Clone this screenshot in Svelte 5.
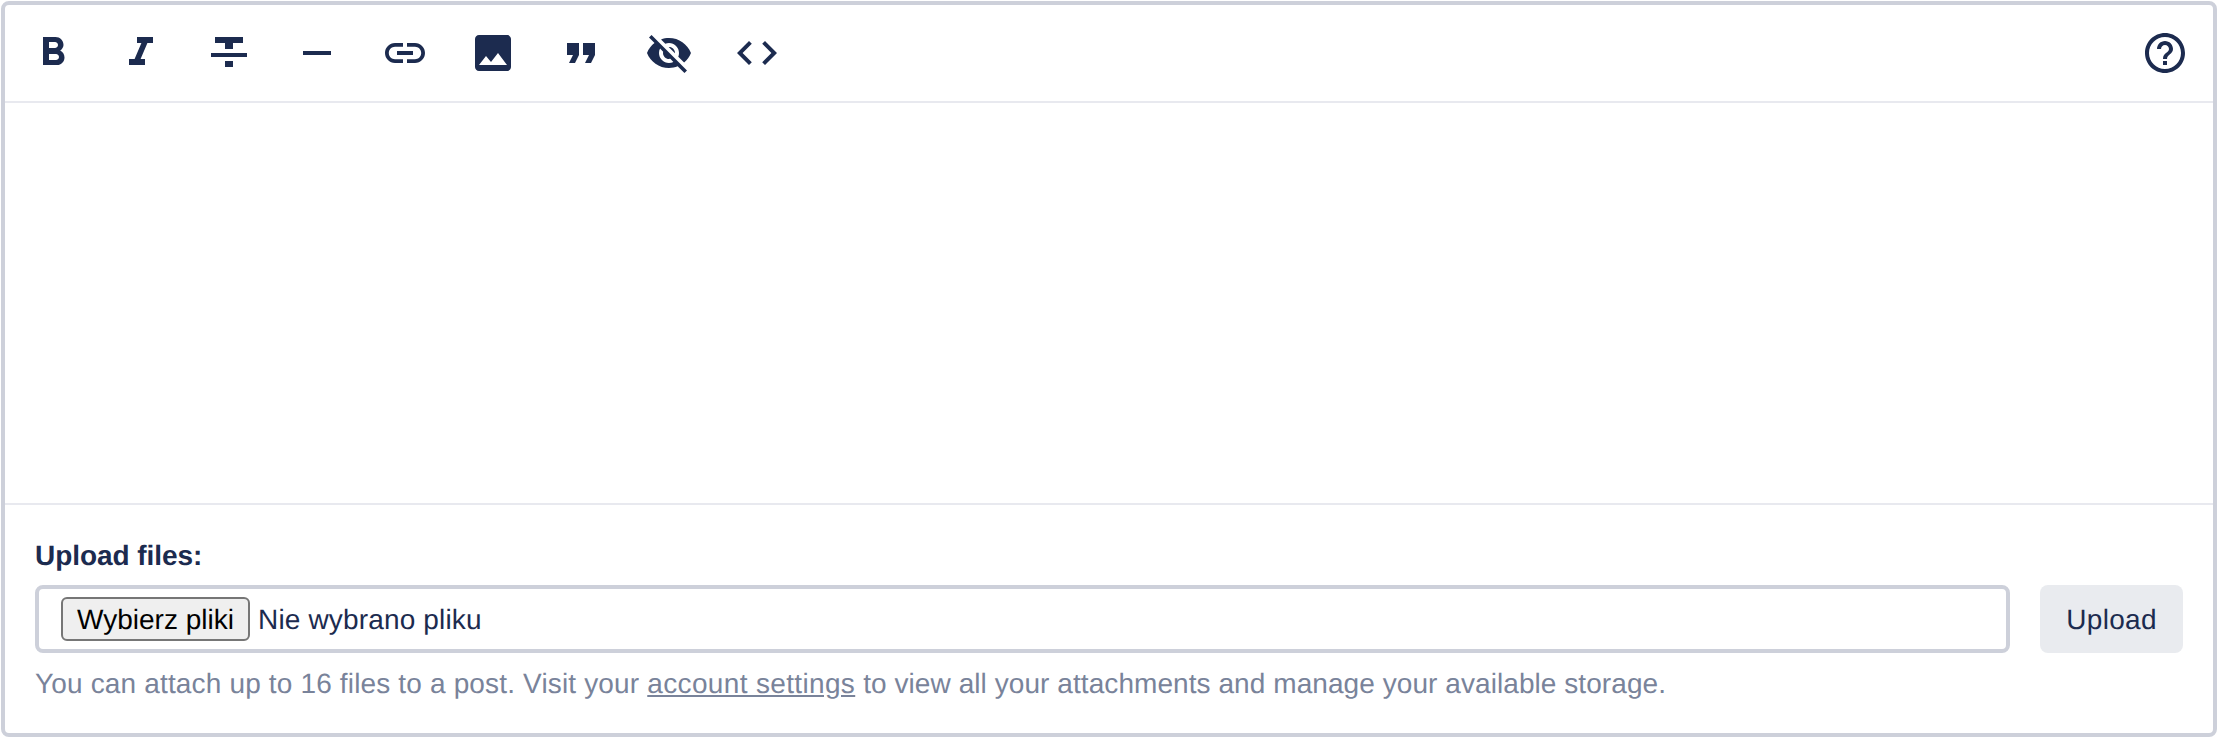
<script>
  const leftIcons = [
    'M15.6 10.79c.97-.67 1.65-1.77 1.65-2.79 0-2.26-1.75-4-4-4H7v14h7.04c2.09 0 3.71-1.7 3.71-3.79 0-1.52-.86-2.82-2.15-3.42zM10 6.5h3c.83 0 1.5.67 1.5 1.5s-.67 1.5-1.5 1.5h-3v-3zm3.5 9H10v-3h3.5c.83 0 1.5.67 1.5 1.5s-.67 1.5-1.5 1.5z',
    'M10 4v3h2.21l-3.42 8H6v3h8v-3h-2.21l3.42-8H18V4z',
    'M10 19h4v-3h-4v3zM5 4v3h5v3h4V7h5V4H5zM3 14h18v-2H3v2z',
    'M19 13H5v-2h14v2z',
    'M3.9 12c0-1.71 1.39-3.1 3.1-3.1h4V7H7c-2.76 0-5 2.24-5 5s2.24 5 5 5h4v-1.9H7c-1.71 0-3.1-1.39-3.1-3.1zM8 13h8v-2H8v2zm9-6h-4v1.9h4c1.71 0 3.1 1.39 3.1 3.1s-1.39 3.1-3.1 3.1h-4V17h4c2.76 0 5-2.24 5-5s-2.24-5-5-5z',
    'M21 19V5c0-1.1-.9-2-2-2H5c-1.1 0-2 .9-2 2v14c0 1.1.9 2 2 2h14c1.1 0 2-.9 2-2zM8.5 13.5l2.5 3.01L14.5 12l4.5 6H5l3.5-4.5z',
    'M6 17h3l2-4V7H5v6h3zm8 0h3l2-4V7h-6v6h3z',
    'M12 7c2.76 0 5 2.24 5 5 0 .65-.13 1.26-.36 1.83l2.92 2.92c1.51-1.26 2.7-2.89 3.43-4.75-1.73-4.39-6-7.5-11-7.5-1.4 0-2.74.25-3.98.7l2.16 2.16C10.74 7.13 11.35 7 12 7zM2 4.27l2.28 2.28.46.46C3.08 8.3 1.78 10.02 1 12c1.73 4.39 6 7.5 11 7.5 1.55 0 3.03-.3 4.38-.84l.42.42L19.73 22 21 20.73 3.27 3 2 4.27zM7.53 9.8l1.55 1.55c-.05.21-.08.43-.08.65 0 1.66 1.34 3 3 3 .22 0 .44-.03.65-.08l1.55 1.55c-.67.33-1.41.53-2.2.53-2.76 0-5-2.24-5-5 0-.79.2-1.53.53-2.2zm4.31-.78l3.15 3.15.02-.16c0-1.66-1.34-3-3-3l-.17.01z',
    'M9.4 16.6L4.8 12l4.6-4.6L8 6l-6 6 6 6 1.4-1.4zm5.2 0l4.6-4.6-4.6-4.6L16 6l6 6-6 6-1.4-1.4z'
  ];
  const help = 'M11 18h2v-2h-2v2zm1-16C6.48 2 2 6.48 2 12s4.48 10 10 10 10-4.48 10-10S17.52 2 12 2zm0 18c-4.41 0-8-3.59-8-8s3.59-8 8-8 8 3.59 8 8-3.59 8-8 8zm0-14c-2.21 0-4 1.79-4 4h2c0-1.1.9-2 2-2s2 .9 2 2c0 2-3 1.75-3 5h2c0-2.25 3-2.5 3-5 0-2.21-1.79-4-4-4z';
</script>

<div class="editor">
  <div class="toolbar">
    <div class="group">
      {#each leftIcons as d}
        <svg class="icon" viewBox="0 0 24 24" aria-hidden="true"><path {d} /></svg>
      {/each}
    </div>
    <svg class="icon" viewBox="0 0 24 24" aria-hidden="true"><path d={help} /></svg>
  </div>
  <div class="body"></div>
  <div class="upload">
    <div class="label">Upload files:</div>
    <div class="row">
      <div class="file">
        <button class="choose" type="button">Wybierz pliki</button>
        <span class="none">Nie wybrano pliku</span>
      </div>
      <button class="send" type="button">Upload</button>
    </div>
    <p class="hint">You can attach up to 16 files to a post. Visit your <a href="#settings">account settings</a> <span class="tail">to view all your attachments and manage your available storage.</span></p>
  </div>
</div>

<style>
  :global(body) {
    margin: 0;
    background: #fff;
  }
  .editor {
    box-sizing: border-box;
    width: 2216px;
    height: 736px;
    margin: 1px 0 0 1px;
    border: 4px solid #cdd0da;
    border-radius: 8px;
    display: flex;
    flex-direction: column;
    font-family: "Liberation Sans", Arial, sans-serif;
    color: #1c2b4f;
    text-rendering: geometricPrecision;
  }
  .toolbar {
    height: 96px;
    padding: 0 24px;
    display: flex;
    align-items: center;
    justify-content: space-between;
    border-bottom: 2px solid #e8e9ef;
    flex: none;
  }
  .group {
    display: flex;
    gap: 40px;
  }
  .icon {
    width: 48px;
    height: 48px;
    display: block;
    fill: #1c2b4f;
  }
  .body {
    flex: 1;
  }
  .upload {
    border-top: 2px solid #e8e9ef;
    padding: 35px 30px 0;
    height: 230px;
    box-sizing: border-box;
    flex: none;
  }
  .label {
    font-size: 28px;
    font-weight: 700;
    line-height: 32px;
    margin-bottom: 13px;
    letter-spacing: -0.06px;
  }
  .row {
    display: flex;
    gap: 30px;
  }
  .file {
    flex: 1;
    box-sizing: border-box;
    height: 68px;
    border: 4px solid #cdd0da;
    border-radius: 8px;
    padding: 0 22px;
    display: flex;
    align-items: center;
    gap: 8px;
    font-size: 28px;
  }
  .none {
    letter-spacing: 0.16px;
    padding-top: 2px;
  }
  .choose {
    box-sizing: border-box;
    height: 44px;
    width: 189px;
    padding: 2px 0 0;
    background: #efefef;
    border: 2px solid #767676;
    border-radius: 6px;
    color: #000;
    font: inherit;
    font-size: 28px;
    text-rendering: geometricPrecision;
  }
  .send {
    box-sizing: border-box;
    width: 143px;
    height: 68px;
    border: 0;
    border-radius: 8px;
    background: #e9ebef;
    color: #1c2b4f;
    padding: 2px 0 0;
    font: inherit;
    font-size: 28px;
    letter-spacing: 0.3px;
    text-rendering: geometricPrecision;
  }
  .hint {
    margin: 14px 0 0;
    font-size: 28px;
    line-height: 34px;
    letter-spacing: 0.16px;
    color: #79839a;
  }
  .hint a {
    color: inherit;
    text-decoration: underline;
    letter-spacing: 0.35px;
  }
  .tail {
    letter-spacing: 0.07px;
  }
</style>
